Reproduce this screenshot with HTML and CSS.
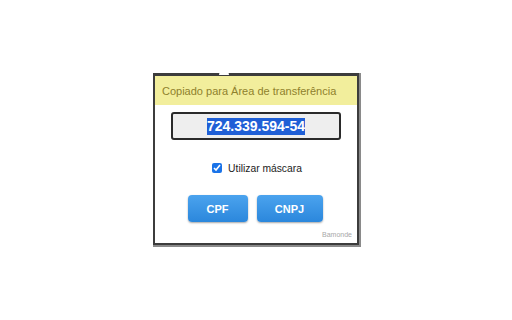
FILE: index.html
```html
<!doctype html>
<html lang="pt-BR">
<head>
    <meta charset="UTF-8">
    <title>Gerador CPF/CNPJ</title>
    <link rel="stylesheet" href="styles.css">
</head>
<body>
<div class="popup">
    <span class="popup-notch"></span>

    <div class="popup-msg">Copiado para Área de transferência</div>

    <div class="popup-body">
        <div class="doc-field">
            <span class="doc-value">724.339.594-54</span>
        </div>

        <label class="mask-option">
            <input type="checkbox" checked>
            <span>Utilizar máscara</span>
        </label>

        <div class="popup-actions">
            <button class="btn btn-cpf">CPF</button>
            <button class="btn btn-cnpj">CNPJ</button>
        </div>

        <div class="popup-credit">Bamonde</div>
    </div>
</div>
</body>
</html>
```

FILE: styles.css
```css
html, body {
    margin: 0;
    height: 100%;
    background: #fff;
}

body {
    display: flex;
    align-items: flex-start;
    justify-content: center;
    padding-top: 73px;
    box-sizing: border-box;
    font-family: "Liberation Sans", Arial, sans-serif;
}

.popup {
    position: relative;
    width: 202px;
    border: 2px solid #3c3c3c;
    border-top-width: 3px;
    box-shadow: 1px 1px 0 1px #8a8a8a;
    background: #fff;
}

.popup-notch {
    position: absolute;
    top: -6px;
    left: 64px;
    width: 10px;
    height: 5px;
    background: #fff;
    border-radius: 5px 5px 0 0;
}

.popup-msg {
    height: 29px;
    line-height: 31px;
    padding-left: 7px;
    background: #f2ee9c;
    color: #8f812c;
    font-size: 11px;
}

.popup-body {
    display: flex;
    flex-direction: column;
    align-items: center;
    padding-top: 7px;
}

.doc-field {
    box-sizing: border-box;
    width: 170px;
    height: 28px;
    border: 2px solid #2a2a2a;
    border-radius: 3px;
    background: #eeeeee;
    display: flex;
    align-items: center;
    justify-content: center;
}

.doc-value {
    background: #1f5fd6;
    color: #fff;
    font-size: 14px;
    font-weight: bold;
    line-height: 17px;
}

.mask-option {
    display: flex;
    align-items: center;
    height: 10px;
    margin-top: 23px;
    padding-left: 2px;
    font-size: 10.3px;
    color: #222;
}

.mask-option input {
    width: 10px;
    height: 10px;
    margin: 0 6px 0 0;
    accent-color: #1a73e8;
}

.popup-actions {
    display: flex;
    gap: 9px;
    margin-top: 22px;
    padding-right: 2px;
}

.btn {
    height: 27px;
    border: none;
    border-radius: 4px;
    background: linear-gradient(#4ba3ee, #2b87dc);
    box-shadow: 0 1px 2px rgba(0, 0, 0, 0.35);
    color: #fff;
    font-family: "Liberation Sans", Arial, sans-serif;
    font-size: 11px;
    font-weight: bold;
    padding: 0;
}

.btn-cpf {
    width: 60px;
}

.btn-cnpj {
    width: 66px;
}

.popup-credit {
    align-self: flex-end;
    height: 9px;
    line-height: 9px;
    margin: 8px 5px 4px 0;
    font-size: 7px;
    color: #a8a8a8;
}
```
